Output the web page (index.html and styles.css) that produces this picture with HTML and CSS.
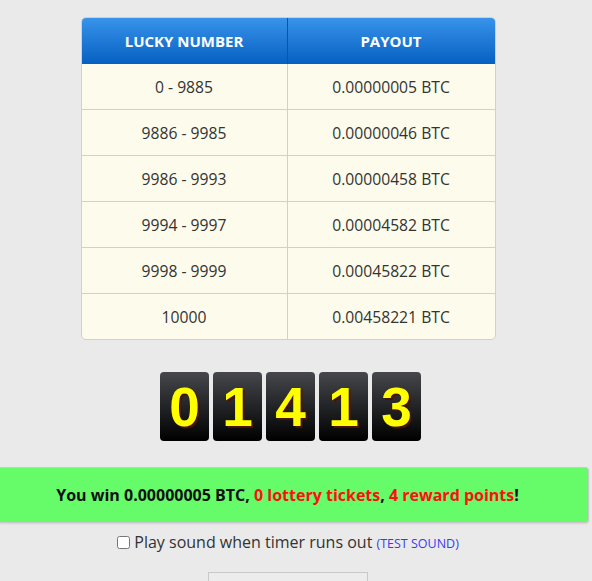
FILE: index.html
```html
<!DOCTYPE html>
<html lang="en">
<head>
    <meta charset="UTF-8">
    <meta name="viewport" content="width=device-width, initial-scale=1.0">
    <title>Free Roll</title>
    <link rel="stylesheet" href="styles.css">
</head>
<body>
    <div class="page">
        <div class="payout-wrap">
            <table class="payout-table">
                <thead>
                    <tr>
                        <th>Lucky Number</th>
                        <th>Payout</th>
                    </tr>
                </thead>
                <tbody>
                    <tr><td>0 - 9885</td><td>0.00000005 BTC</td></tr>
                    <tr><td>9886 - 9985</td><td>0.00000046 BTC</td></tr>
                    <tr><td>9986 - 9993</td><td>0.00000458 BTC</td></tr>
                    <tr><td>9994 - 9997</td><td>0.00004582 BTC</td></tr>
                    <tr><td>9998 - 9999</td><td>0.00045822 BTC</td></tr>
                    <tr><td>10000</td><td>0.00458221 BTC</td></tr>
                </tbody>
            </table>
        </div>

        <div class="digits">
            <span class="digit">0</span>
            <span class="digit">1</span>
            <span class="digit">4</span>
            <span class="digit">1</span>
            <span class="digit">3</span>
        </div>

        <div class="win-box">
            <p>You win 0.00000005 BTC, <span class="red">0 lottery tickets</span>, <span class="red">4 reward points</span>!</p>
        </div>

        <p class="sound-line">
            <input type="checkbox" class="sound-check"> Play sound when timer runs out <a href="#" class="test-sound">(TEST SOUND)</a>
        </p>

        <div class="roll-box"></div>
    </div>
</body>
</html>
```
FILE: styles.css
```css
*{
    margin:0;
    padding:0;
    box-sizing:border-box;
}
body{
    background-color:#eaeaea;
    font-family:"Open Sans", Arial, sans-serif;
    color:#333;
    overflow:hidden;
}
.page{
    width:576px;
    padding-top:17px;
    display:flex;
    flex-direction:column;
    align-items:center;
}
.payout-wrap{
    width:415px;
    border:1px solid #d0d0d0;
    border-radius:5px;
    overflow:hidden;
    background-color:#fdfbec;
}
.payout-table{
    width:100%;
    border-collapse:separate;
    border-spacing:0;
    font-size:15.7px;
}
.payout-table th{
    height:46px;
    color:white;
    font-weight:bold;
    font-size:15px;
    text-transform:uppercase;
    background:linear-gradient(#3893ea, #0660c2);
    border-right:1px solid #0a55a8;
}
.payout-table td{
    height:46px;
    text-align:center;
    border-top:1px solid #d0d0d0;
    border-right:1px solid #d0d0d0;
}
.payout-table th:first-child,
.payout-table td:first-child{
    width:206px;
}
.payout-table tr>*:last-child{
    border-right:none;
}
.payout-table tbody tr:first-child td{
    border-top:none;
    height:45px;
}
.digits{
    margin-top:32px;
    display:flex;
    gap:4px;
    margin-left:5px;
}
.digit{
    width:49px;
    height:69px;
    border-radius:4px;
    background:linear-gradient(#45474c, #000);
    color:#ffff00;
    font-family:"Liberation Sans", Arial, sans-serif;
    font-weight:bold;
    font-size:55px;
    display:flex;
    align-items:center;
    justify-content:center;
    text-shadow:2px 2px 0 #4a1200;
}
.win-box{
    margin-top:26px;
    align-self:flex-start;
    width:589px;
    height:56px;
    background-color:#66fb69;
    border:1px solid #c9c9c9;
    border-left:none;
    border-radius:0 4px 4px 0;
    display:flex;
    align-items:center;
    justify-content:center;
    font-weight:bold;
    font-size:16px;
    color:#111;
    padding-right:13px;
    box-shadow:0 1px 2px rgba(0,0,0,0.1);
}
.win-box .red{
    color:#ff0f0f;
}
.sound-line{
    margin-top:8px;
    font-size:16px;
    color:#333;
    text-align:center;
}
.sound-check{
    width:13px;
    height:13px;
    vertical-align:-1px;
}
.test-sound{
    color:#3b3bee;
    font-size:12.5px;
    text-decoration:none;
}
.roll-box{
    margin-top:19px;
    margin-left:0;
    width:160px;
    height:30px;
    border:1px solid #c8c8c8;
    background-color:#ececec;
}
```
